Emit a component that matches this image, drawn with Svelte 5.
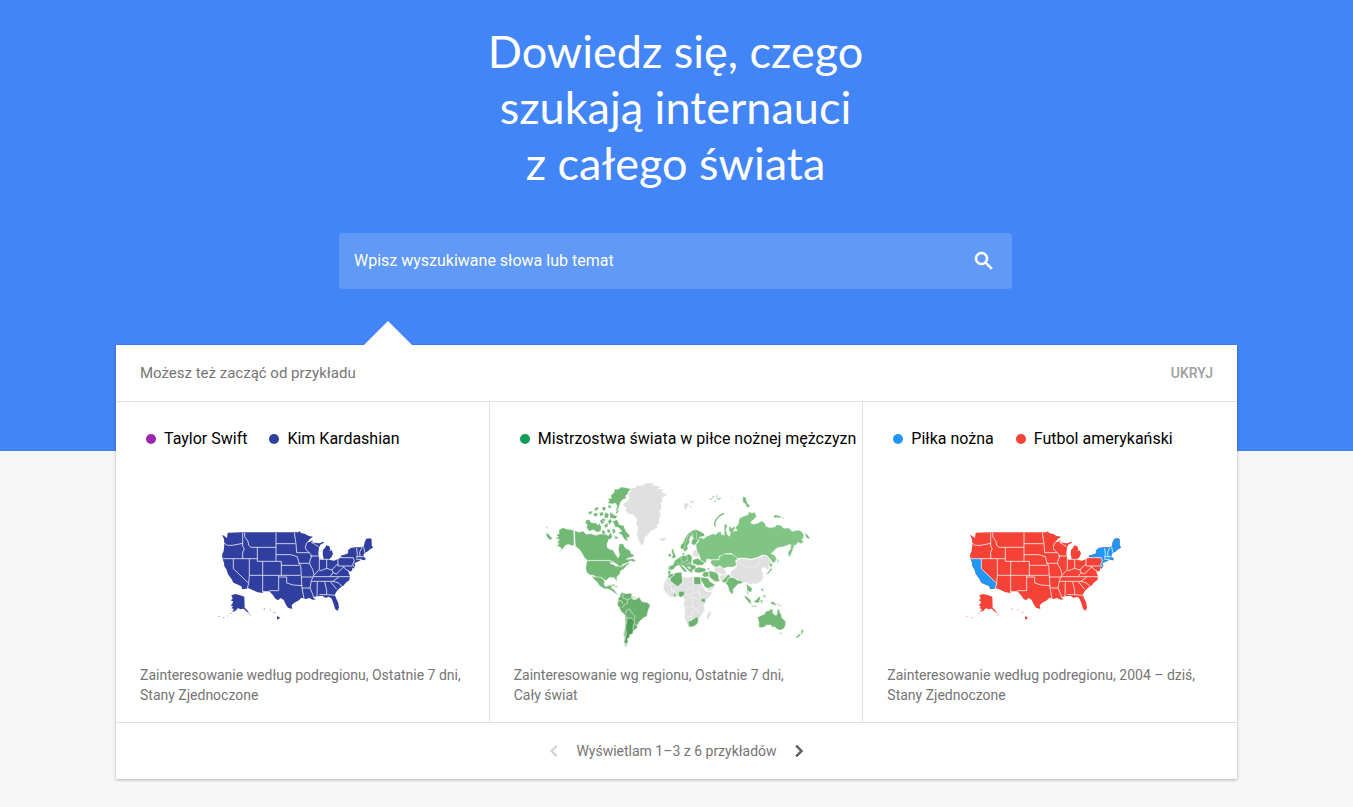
<script>
  const examples = [
    {
      terms: [
        { label: 'Taylor Swift', color: '#9c27b0' },
        { label: 'Kim Kardashian', color: '#303f9f' }
      ],
      map: 'usa',
      base: '#303f9f',
      accent: '#303f9f',
      caption: ['Zainteresowanie według podregionu, Ostatnie 7 dni,', 'Stany Zjednoczone']
    },
    {
      terms: [{ label: 'Mistrzostwa świata w piłce nożnej mężczyzn', color: '#0f9d58' }],
      map: 'world',
      caption: ['Zainteresowanie wg regionu, Ostatnie 7 dni,', 'Cały świat']
    },
    {
      terms: [
        { label: 'Piłka nożna', color: '#2196f3' },
        { label: 'Futbol amerykański', color: '#f44336' }
      ],
      map: 'usa',
      base: '#f44336',
      accent: '#2196f3',
      caption: ['Zainteresowanie według podregionu, 2004 – dziś,', 'Stany Zjednoczone']
    }
  ];
  let open = $state(true);
  let query = $state('');
</script>

{#snippet usa(base, accent)}
  <svg class="usa" viewBox="0 -60 552 390" aria-hidden="true">
    <g fill={base}>
      <path d="M36,44 46,50 51,54 53,38 98,37 266,37 269,33 273,39 286,42 296,48 309,50 299,58 290,68 300,65 308,60 306,67 318,69 328,70 340,65 342,68 331,74 327,83 325,98 327,114 334,118 341,117 338,102 339,90 345,83 349,76 358,79 361,88 358,94 365,90 369,101 364,112 356,119 372,122 386,116 394,111 392,107 412,101 415,96 413,92 422,84 436,82 456,82 462,78 464,66 469,56 480,55 485,58 485,75 489,83 480,88 474,94 465,98 460,105 462,112 468,116 464,121 455,119 446,124 436,128 433,130 436,137 431,146 426,143 427,151 420,155 415,150 416,160 420,168 418,181 409,187 400,197 390,203 380,214 374,224 379,236 385,249 387,263 382,273 375,266 370,250 365,236 357,230 347,234 338,228 326,228 313,230 309,233 318,238 308,239 298,234 287,237 274,233 267,241 253,248 245,256 247,267 234,263 227,253 221,240 212,234 204,241 197,237 188,224 178,214 158,214 158,219 143,217 116,205 97,208 94,199 84,194 70,188 65,178 54,163 49,148 43,139 42,128 38,118 36,105 41,92 43,75 42,58z" />
      <path d="M64,226 76,222 91,226 103,230 104,263 112,271 118,281 108,273 101,266 91,268 84,264 76,273 66,275 72,267 64,265 69,259 62,256 68,250 69,244 62,241 68,236z" />
      <path d="M201,288 210,293 206,298 201,298z" />
      <path opacity=".55" d="M191,276h5v3h-5zM179,268l5,2-4,2zM161,265h4v3h-4zM60,280h5v2h-5zM51,287h5v2h-5zM39,292h5v2h-5zM25,289h4v2h-4zM118,283h4v3h-4z" />
    </g>
    {#if accent !== base}
      <g fill={accent}>
        <path d="M38,116H70V146L116,190 112,205 97,208 94,199 84,194 70,188 65,178 54,163 49,148 43,139 42,128z" />
        <path d="M394,112 392,107 412,101 415,96 413,92 422,84 436,82 456,82 462,78 464,66 469,56 480,55 485,58 485,75 489,83 480,88 474,94 465,98 460,105 462,112 468,116 464,121 455,119 446,124 436,128 433,130 436,137 431,146 426,136 432,124 428,114z" />
      </g>
    {/if}
    <g fill="none" stroke="#fff" stroke-opacity=".8" stroke-width="2.8" stroke-linejoin="round">
      <path d="M42,69 52,76 68,76 98,70M98,38V78L103,87 98,96V116M38,116H142M104,38V50L114,64 116,76 123,82H198M142,82V124H198V38M198,71H256M198,104H242L262,110M253,38 256,58 258,71 260,98H298M290,68 286,82 288,89 298,98" />
      <path d="M70,116V146L116,190M118,116V166M118,166 116,190 112,205M118,166H272M158,124V216M198,124H214V166M214,136H268M262,110 266,126 272,138 274,166V171L276,204 282,236M206,167V212H178M206,171H230V189L250,195 276,197" />
      <path d="M265,130H298M298,98 306,108 300,120 299,132 308,148 312,164 304,182 300,204 307,220 311,232M300,108H326M303,66 316,74 326,80M328,114V148L312,166M328,118H356M350,119V146M328,153 340,149 350,145 366,150 373,141 384,132M384,116V138H428M390,113H430L433,123 428,133 433,142M308,170H420M304,184H368M274,171H306" />
      <path d="M276,204H300M322,185 321,229M344,185 350,211 350,224M328,224 352,224 374,226M362,186 380,208M368,184 384,188 398,200M366,150 369,158 360,170M369,158 380,162 391,150 402,140M400,139 407,148 417,153M386,172 368,184M440,84 442,104 440,116M456,83 449,96 450,110M461,80 464,98M440,110H461M439,118H455M453,118V124" />
    </g>
  </svg>
{/snippet}

{#snippet world()}
  <svg class="world" viewBox="0 0 840 540" aria-hidden="true">
    <g fill="#72b976" stroke="#fff" stroke-width="1" stroke-linejoin="round">
      <path d="M61,181 70,175 68,166 80,158 92,162 113,166 114,212 104,211 98,208 88,211 80,223 66,235 77,222 72,216 63,214 69,206 64,202 71,194 59,190 68,185zM30,155l6,3-4,3zM29,174l9,3 6,8 6,5-8,5-9-8z" />
      <path d="M116,167 130,172 141,168 150,178 165,176 179,181 195,177 210,178 217,182 224,172 229,184 222,195 213,207 213,217 221,223 231,225 238,238 246,249 251,240 247,224 250,207 261,206 266,216 272,222 281,225 285,236 295,240 290,246 279,248 270,253 280,253 291,251 300,257 292,260 283,257 272,264 261,268 254,275 243,269 232,260 220,256 154,256 146,249 140,238 131,224 118,212z" />
      <path d="M224,62 236,50 233,44 248,42 255,36 270,38 285,42 278,49 275,57 268,63 271,70 261,73 253,82 250,93 246,104 239,107 244,93 238,84 230,87 216,85 220,76 214,71 227,70zM216,89l9,4 1,7-9-2zM198,95l12,2-2,8-8,3zM175,101l10-6 3,7-10,7zM158,111l12-4-2,8-10,5zM171,116l12-3 3,7-9,6zM190,113l11-2 2,9-11,4zM207,112l12,6-4,12-10-2zM222,110l12,10 10,2-4,9-18-2zM239,112l6-8 3,5-5,7z" />
      <path d="M150,135 160,134 166,143 179,144 187,150 190,144 196,156 194,168 184,172 171,164 160,169 151,157 155,149 148,145zM191,136l11-4 3,11-9,5zM204,150l12-7-1,12-8,4zM215,138l9-7 4,9-8,10zM198,165l8,2 3,10-10,0zM212,165l8-3 4,8-8,5z" />
      <path d="M229,139 244,134 250,149 263,152 270,170 281,180 280,189 272,186 277,199 264,192 257,179 246,174 258,168 247,157 237,156 235,149zM228,163l8,-2 3,11-8,4zM235,183l12,3-3,6-7-1zM199,130l10 3-4 6-8-2z" />
      <path d="M153,257H220L231,261 241,268 253,276 266,270 276,263 281,264 269,275 263,282 254,287 251,297 243,305 242,313 244,320 239,315 235,308 221,307 211,316 206,315 196,307 181,306 173,301 162,300 152,292 149,280z" />
      <path d="M167,303 177,306 195,307 206,318 204,328 209,335 221,331 229,329 226,339 235,344 240,353 246,356 242,358 235,353 227,347 217,342 205,341 191,333 184,322 173,312zM223,329l10,-2 4,5-5,1zM237,332l9,2-3,3-6-1z" />
    </g>
    <g fill="#fff"><path d="M219,262 234,263 242,268 239,275 234,270 225,267zM240,265 246,272 244,277 240,273zM218,191 229,197 238,203 247,202 248,209 244,230 232,219 216,216 213,207z" /></g>

    <path fill="#e0e0e0" d="M262,86 276,77 281,68 276,57 284,49 283,41 297,39 305,31 319,32 329,25 344,24 355,27 350,33 366,32 374,38 361,43 383,43 376,50 387,56 393,61 376,68 379,78 374,86 377,99 370,108 374,119 368,132 371,142 362,150 365,157 354,164 343,169 335,180 326,187 323,204 318,212 311,203 306,190 303,174 307,157 301,149 303,132 293,119 283,117 276,115 268,105 273,99 263,94z" />
    <path fill="#e0e0e0" d="M370,192l8,-4 9,1 2,5-8,5-8-3z" />

    <g fill="#69b16c" stroke="#fff" stroke-width="1.6" stroke-linejoin="round">
      <path d="M245,385 247,370 253,363 252,356 259,352 269,356 286,354 289,364 304,367 309,365 318,380 333,382 343,390 336,408 333,423 321,430 312,438 305,448 304,459 292,468 290,476 280,480 282,485 274,492 276,500 270,509 263,504 265,490 262,480 265,465 268,446 267,421 255,409 249,395 244,391z" />
      <path fill="#4f9d52" d="M274,429 287,430 295,438 294,447 291,453 292,468 290,476 280,480 282,485 274,492 276,500 270,509 266,499 271,477 269,453z" />
      <path fill="#e0e0e0" d="M287,361 299,366 308,367 303,372 292,374 287,368z" />
      <path fill="none" d="M260,354 262,370 274,373 274,386 264,390 258,399M274,374 287,369M245,379 256,377 260,387M268,418 271,406 281,402 288,414 297,424 295,435M268,421 275,431M266,430 266,490M295,447 303,452" />
      <path d="M264,506l10,5-5,4z" />
    </g>

    <g transform="translate(390 0)" stroke="#fff" stroke-width="1.3" stroke-linejoin="round">
      <path fill="#80c583" d="M90,207 98,200 96,191 105,187 113,192 122,184 130,181 141,176 149,179 157,171 166,170 166,178 175,180 174,153 180,145 184,151 180,166 185,180 190,184 194,174 188,164 190,153 199,160 204,151 208,160 201,169 214,167 208,158 217,147 220,130 232,124 246,119 249,110 258,114 266,111 272,124 265,132 253,142 262,148 276,144 287,138 297,144 300,154 313,158 328,155 330,149 345,151 353,160 368,159 378,169 397,165 406,169 413,178 413,188 407,193 413,202 405,206 396,202 391,210 385,211 379,229 374,241 367,246 366,231 374,221 374,208 361,212 349,216 334,218 324,227 315,236 325,240 332,251 328,260 321,265 314,254 301,241 288,240 278,246 257,252 235,249 214,250 204,242 196,235 177,236 172,241 160,243 158,254 148,254 137,254 123,252 119,265 104,256 101,243 92,233z" />
      <path fill="#80c583" d="M160,245 176,237 197,238 208,244 215,252 208,257 214,269 202,276 183,276 174,281 161,272 153,277 143,274 133,263 137,255 159,255z" />
      <path fill="#72b976" d="M415,173 425,180 433,191 422,190zM323,123l6-4 9,3 10,4-8,3-8-2-7,3zM348,127l5 0 0 4-4 0z" />
      <path fill="#72b976" d="M231,64 240,68 241,77 246,87 253,94 244,98 238,86 230,80z" />
      <path fill="#72b976" stroke="none" opacity=".6" d="M127,72l12-3-1,5zM138,62l9,4-7,3zM150,58l5,5-4,6zM150,72l14-5 2,3-9,5zM144,77l7,0-2,4-6-2zM200,66l4 2-4 2z" />
      <path fill="none" stroke="#72b976" stroke-width="4" d="M174,115 161,122 151,133 146,144 148,155" />
      <path fill="#e0e0e0" stroke="none" d="M54,86l12-2 2,8-5,2-2,13-7-10zM70,80l14-4 2,5-10,4zM70,92l7,0-3,9z" />
      <path fill="#72b976" d="M44,211 52,202 57,190 65,177 75,169 89,163 105,170 116,178 114,184 101,186 95,199 86,211 77,208 76,199 82,191 76,181 70,192 71,202 64,213 66,222 56,231 51,222 43,221z" />
      <path fill="none" d="M54,223 58,205 66,183 76,171 87,181M87,165 92,175 91,195M79,177 83,190" />
      <path fill="#72b976" d="M16,224 24,221 23,230 30,243 27,250 15,249 21,241 18,234zM7,237l9,-1-1,8-7,3zM46,239l8-8 2,9zM26,256 38,249 47,242 60,241 68,237 77,242 78,254 76,266 90,273 88,283 80,284 79,294 72,291 62,282 53,272 46,270 55,280 64,289 56,292 46,280 40,271 29,274 24,282 15,286 5,283 9,273 22,269z" />
      <path fill="#72b976" d="M80,254 96,250 106,258 117,263 109,271 95,271 81,266zM85,282 98,276 117,280 121,289 108,292 96,294 86,290zM121,278l12,3-6,4zM7,286l8,2-2,9-8,3z" />
      <path fill="#e0e0e0" d="M81,228l9-5 9,15-2,8-18-2zM64,276l8-1 2,8-7-3z" />
      <path fill="none" d="M26,256 34,264 41,271M47,242 45,253 49,263 42,268M62,241 64,257 74,266M49,263 64,257M55,268 69,266 82,272M11,284V273" />
      <path fill="#e0e0e0" d="M143,277 154,277 163,275 175,282 181,292 177,302 167,298 155,295 147,290zM160,303 172,297 187,298 177,310 164,318z" />
      <path fill="#e0e0e0" d="M193,296 196,286 206,281 213,274 210,262 216,253 236,251 256,255 272,250 286,245 290,241 302,242 314,255 316,265 307,276 310,285 304,284 294,276 286,283 290,293 292,305 287,318 272,327 260,326 250,329 241,322 229,324 215,314 204,311 194,301z" />
      <path fill="none" d="M215,255 225,269 247,279 270,275 281,265 276,258 286,249 292,243" />
      <path fill="#72b976" d="M188,307 203,308 215,316 230,318 226,326 216,327 208,336 202,343 201,354 196,358 189,346 185,331 179,326zM167,318 178,308 187,298 194,303 186,314 180,323 169,321z" />
      <path fill="#72b976" d="M128,287 137,289 149,292 157,299 158,311 162,319 148,320 138,313 130,306zM105,306 117,308 126,309 132,320 148,329 141,336 127,341 117,337 111,325 104,317zM113,291 128,290 129,305 116,306 108,302z" />
      <path fill="#e0e0e0" d="M125,341l14,-6 10,-6-8,14-16,7z" />
      <path fill="#e0e0e0" d="M-6,324 3,310 10,300 16,293 32,293 47,291 50,303 64,307 82,305 101,308 106,324 113,338 122,350 139,350 134,362 120,376 113,389 117,406 108,417 103,427 97,436 92,447 83,455 69,456 62,444 54,424 57,407 53,387 56,373 49,363 31,366 13,366 1,357 -8,343z" />
      <path fill="#69b16c" d="M13,307 24,301 27,294 43,292 47,294 48,306 50,321 35,335 22,325 13,318zM4,307 11,297 23,297 22,302 11,309zM84,306h19l2,22H84zM38,349h19l-4,13-9,5-6-4zM105,370l14,-1-2,15-11-5zM66,440 76,436 86,430 95,424 97,440 91,449 81,455 69,456zM23,354h6v12h-5z" />
      <path fill="none" d="M51,303V326L35,337M0,325 15,330 16,346 35,337M80,306V334L57,346M104,329 98,349 83,354 80,337M57,349 63,363 83,354M57,373 79,366 99,374M79,367V396L58,397M79,396 93,403 105,391M57,424H77V405L92,405M77,424 76,436M92,407 105,413M98,350 105,371 122,373M7,346V365M16,346 31,352" />
      <path fill="#e0e0e0" d="M126,414l11,-9-5,20-6,9-5-6z" />
      <path fill="#72b976" d="M241,326 250,333 258,340 257,350 250,351 245,346 248,361 243,355 243,340zM234,361l10,5 10,10 3,13-10-8-10-13zM257,391l17,2-4,3-14-2zM263,377l8,-2 8-11 4,5-4,15-11-1zM283,375l9,0-5,5 3,6-6-3zM286,340l6,1 0,9-6-4zM292,359l8,3-3,6-6-5zM311,381l11,-1 8,7-2,5-9-4z" />
      <path fill="#e0e0e0" d="M329,383l11,3 10,9-8,0-10-5zM350,384l8 1-5 4zM411,414l4 1-3 3z" />
      <path fill="#72b976" d="M274,427 285,422 296,417 299,409 310,407 315,401 322,407 319,412 327,421 333,419 334,404 339,402 342,414 346,419 348,429 359,439 358,453 352,462 342,466 331,461 326,455 318,457 315,450 302,450 294,457 282,458 278,454 279,442zM341,473l7,1-4,6zM406,461l7,6-5,11-6 1 4-7zM400,476l4,4-9,9-7,0z" />
      <path fill="#72b976" d="M311,265l7,0 1,9-8,1zM316,275l2,9-6,7-6,6-9,1 12-9zM301,290l5,6-4,2zM334,252l5,4-5,10z" />
    </g>
  </svg>
{/snippet}

<div class="page">
  <header class="hero">
    <h1>Dowiedz się, czego<br />szukają internauci<br />z całego świata</h1>
    <form class="search" role="search" onsubmit={(e) => e.preventDefault()}>
      <input type="search" aria-label="Wpisz wyszukiwane słowa lub temat" placeholder="Wpisz wyszukiwane słowa lub temat" bind:value={query} />
      <button type="submit" aria-label="Szukaj">
        <svg viewBox="0 0 24 24" width="24" height="24"><path fill="#fff" stroke="#fff" stroke-width=".5" d="M15.5 14h-.79l-.28-.27C15.41 12.59 16 11.11 16 9.5 16 5.91 13.09 3 9.5 3S3 5.91 3 9.5 5.91 16 9.5 16c1.61 0 3.09-.59 4.23-1.57l.27.28v.79l5 4.99L20.49 19l-4.99-5zm-6 0C7.01 14 5 11.99 5 9.5S7.01 5 9.5 5 14 7.01 14 9.5 11.99 14 9.5 14z" /></svg>
      </button>
    </form>
  </header>

  <main class="card">
    <div class="top">
      <h2>Możesz też zacząć od przykładu</h2>
      <button type="button" onclick={() => (open = !open)}>UKRYJ</button>
    </div>
    {#if open}
      <div class="examples">
        {#each examples as ex}
          <article>
            <ul>
              {#each ex.terms as term}
                <li><span class="dot" style:background={term.color}></span>{term.label}</li>
              {/each}
            </ul>
            <div class="map">
              {#if ex.map === 'usa'}
                {@render usa(ex.base, ex.accent)}
              {:else}
                {@render world()}
              {/if}
            </div>
            <p>{ex.caption[0]}<br />{ex.caption[1]}</p>
          </article>
        {/each}
      </div>
      <nav aria-label="Przykłady">
        <button type="button" disabled aria-label="Poprzednie">
          <svg viewBox="0 0 24 24" width="24" height="24"><path fill="#cfcfcf" d="M15.41 7.41 14 6l-6 6 6 6 1.41-1.41L10.83 12z" /></svg>
        </button>
        <span>Wyświetlam 1–3 z 6 przykładów</span>
        <button type="button" aria-label="Następne">
          <svg viewBox="0 0 24 24" width="24" height="24"><path fill="#616161" stroke="#616161" stroke-width=".6" d="M8.59 16.59 10 18l6-6-6-6-1.41 1.41L13.17 12z" /></svg>
        </button>
      </nav>
    {/if}
  </main>
</div>

<style>
  :global(body) {
    background: #f7f7f7;
  }
  .page {
    font-family: Roboto, 'Liberation Sans', sans-serif;
    color: #757575;
    padding-bottom: 28px;
  }
  .hero {
    background: #4285f6;
    padding: 23px 26px 162px 24px;
  }
  h1 {
    margin: 0;
    text-align: center;
    color: #fff;
    font: 400 45px/56px Lato, 'Open Sans', sans-serif;
  }
  .search {
    display: flex;
    align-items: center;
    max-width: 673px;
    height: 56px;
    margin: 42px auto 0;
    border-radius: 4px;
    background: #6199f7;
  }
  .search input {
    flex: 1;
    min-width: 0;
    height: 54px;
    box-sizing: border-box;
    margin-bottom: 2px;
    padding: 0 15px;
    border: 0;
    outline: 0;
    background: none;
    color: #fff;
    font: 400 16px/24px Roboto, sans-serif;
  }
  .search input::placeholder {
    color: #fff;
    opacity: 1;
  }
  button {
    display: flex;
    padding: 0;
    border: 0;
    background: none;
    cursor: pointer;
  }
  .search button {
    margin-right: 16px;
  }
  .card {
    position: relative;
    max-width: 1121px;
    margin: -106px auto 0;
    background: #fff;
    box-shadow: 0 1px 3px rgba(0, 0, 0, 0.28);
  }
  .card::before {
    content: '';
    position: absolute;
    left: 248px;
    top: -24px;
    border: 24px solid transparent;
    border-top: 0;
    border-bottom-color: #fff;
  }
  .top {
    display: flex;
    align-items: center;
    justify-content: space-between;
    height: 56px;
    padding: 0 24px;
    border-bottom: 1px solid #e0e0e0;
  }
  h2 {
    margin: 0;
    font-size: 15px;
    line-height: 20px;
    font-weight: 400;
  }
  .top button {
    color: #9e9e9e;
    font: 500 14px/20px Roboto, sans-serif;
  }
  .examples {
    display: grid;
    grid-template-columns: 373px 373px minmax(0, 1fr);
    grid-template-columns: repeat(3, minmax(0, 1fr));
  }
  article {
    padding: 25px 0 17px;
    overflow: hidden;
  }
  article:not(:last-child) {
    border-right: 1px solid #e0e0e0;
  }
  ul {
    display: flex;
    gap: 22px;
    margin: 0;
    padding: 0 0 0 30px;
    list-style: none;
    color: #000;
    font-size: 16px;
    line-height: 24px;
    white-space: nowrap;
  }
  li {
    display: flex;
    align-items: center;
    gap: 8px;
  }
  .dot {
    width: 10px;
    height: 10px;
    border-radius: 50%;
  }
  .map {
    display: flex;
    align-items: center;
    justify-content: center;
    height: 180px;
    margin: 24px 0 10px;
  }
  .usa {
    width: 184px;
  }
  .world {
    width: 280px;
  }
  p {
    margin: 0;
    padding: 0 24px;
    font-size: 14px;
    line-height: 20px;
  }
  nav {
    display: flex;
    align-items: center;
    justify-content: center;
    gap: 10px;
    height: 55px;
    padding-bottom: 1px;
    border-top: 1px solid #e0e0e0;
    font-size: 14px;
    line-height: 20px;
  }
</style>
